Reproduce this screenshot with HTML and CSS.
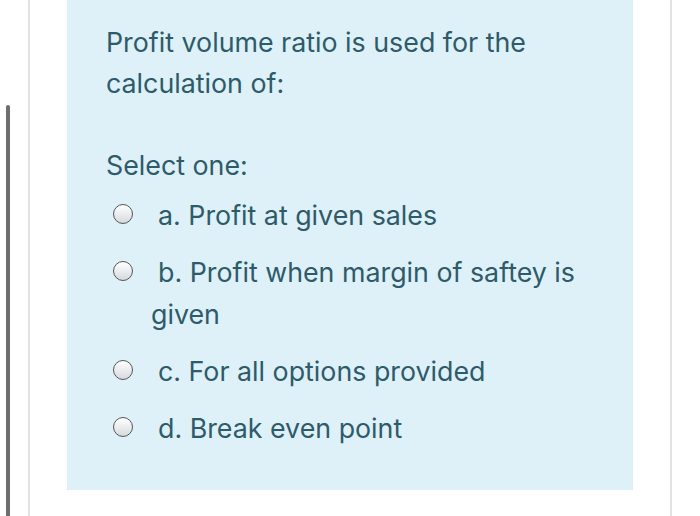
FILE: index.html
```html
<!DOCTYPE html>
<html>
<head>
<meta charset="utf-8">
<link rel="stylesheet" href="styles.css">
</head>
<body>
<div class="page">
  <div class="scroll-bar"></div>
  <div class="rule rule-left"></div>
  <div class="panel">
    <div class="question">Profit volume ratio is used for the calculation of:</div>
    <div class="prompt">Select one:</div>
    <div class="answers">
      <div class="option"><span class="radio"></span><span class="label">a. Profit at given sales</span></div>
      <div class="option"><span class="radio"></span><span class="label">b. Profit when margin of saftey is given</span></div>
      <div class="option"><span class="radio"></span><span class="label">c. For all options provided</span></div>
      <div class="option"><span class="radio"></span><span class="label">d. Break even point</span></div>
    </div>
  </div>
  <div class="rule rule-right"></div>
</div>
</body>
</html>
```
FILE: styles.css
```css
html, body {
  margin: 0;
  padding: 0;
  background: #ffffff;
}
.page {
  width: 700px;
  height: 516px;
  display: flex;
  align-items: flex-start;
  overflow: hidden;
  font-family: Inter, "Liberation Sans", Arial, sans-serif;
  color: #2e5b69;
}
.scroll-bar {
  width: 4px;
  height: 411px;
  margin-left: 6px;
  margin-top: 105px;
  background: #6e6e6e;
  border-radius: 2px 2px 0 0;
}
.rule {
  width: 2px;
  height: 516px;
  background: #e2e2e2;
}
.rule-left {
  margin-left: 18px;
}
.rule-right {
  margin-left: 37px;
}
.panel {
  margin-left: 37px;
  width: 566px;
  height: 490px;
  box-sizing: border-box;
  background: #def0f8;
  padding: 22px 30px 0 39px;
  font-size: 26.8px;
}
.question {
  line-height: 41px;
  width: 440px;
}
.prompt {
  margin-top: 41px;
  line-height: 41px;
}
.answers {
  margin-top: 8px;
  display: flex;
  flex-direction: column;
  gap: 15px;
}
.option {
  display: flex;
  align-items: flex-start;
  line-height: 42px;
}
.radio {
  flex: none;
  width: 18px;
  height: 18px;
  margin-left: 7px;
  margin-top: 10px;
  border: 1.5px solid #555555;
  border-radius: 50%;
  background: linear-gradient(#ffffff, #d6dadd);
}
.label {
  margin-left: 18px;
  text-indent: 7px;
  width: 440px;
}
```
